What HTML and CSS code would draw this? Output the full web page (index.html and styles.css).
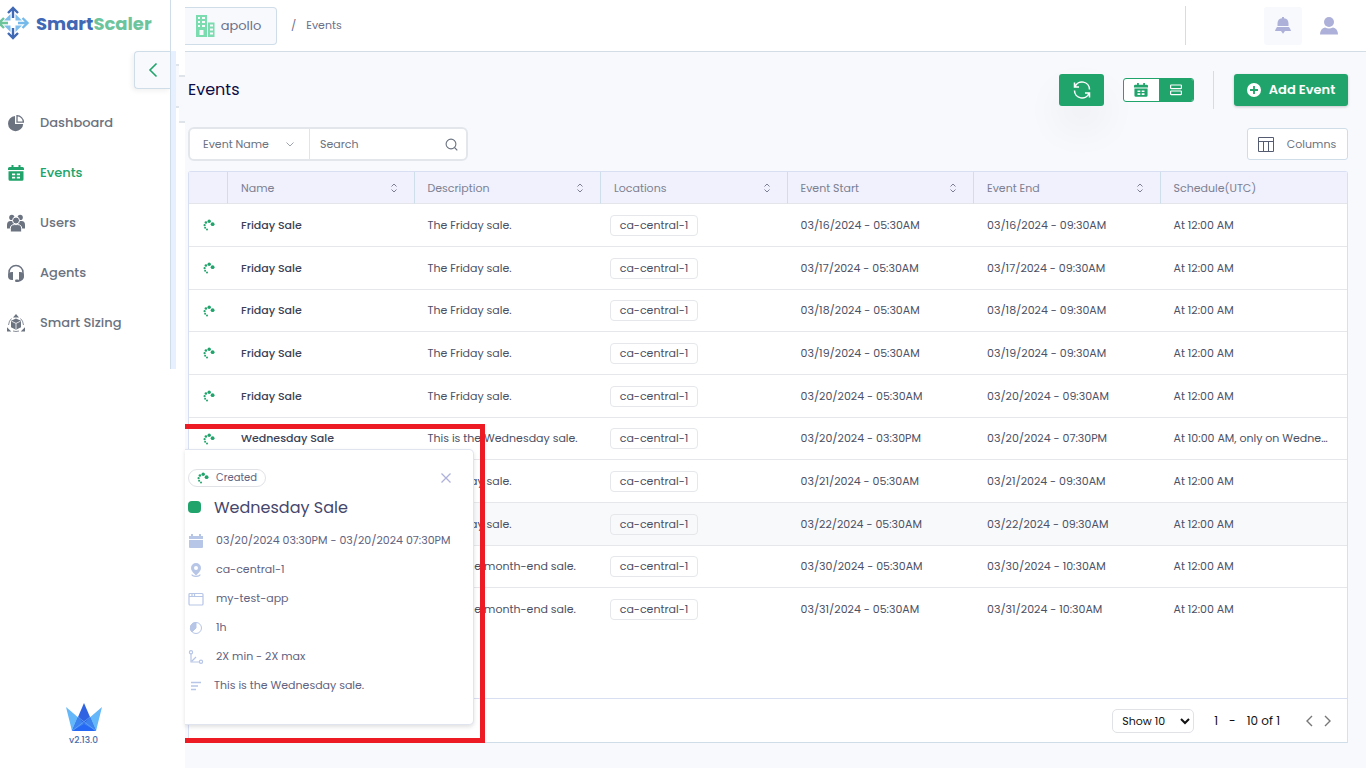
FILE: index.html
```html
<!DOCTYPE html>
<html lang="en">
<head>
    <meta charset="UTF-8">
    <meta name="viewport" content="width=device-width, initial-scale=1.0">
    <title>SmartScaler - Events</title>
    <link rel="stylesheet" href="styles.css">
</head>
<body>
    <!-- Shared icons -->
    <svg class="sprite" aria-hidden="true">
        <symbol id="spinner" viewBox="0 0 12 12">
            <circle cx="9.6" cy="5.2" r="1.9"/>
            <circle cx="6.200" cy="2.200" r="1.700"/>
            <circle cx="2.9" cy="3.5" r="1.300"/>
            <circle cx="1.6" cy="6.200" r="1.100"/>
            <circle cx="2.1" cy="8.800" r="1"/>
            <circle cx="4" cy="10.6" r="1"/>
        </symbol>
        <symbol id="sort" viewBox="0 0 8 12">
            <path d="M1.500 4.500 4 2l2.500 2.500M1.500 7.500 4 10l2.500-2.500" fill="none" stroke="currentColor"/>
        </symbol>
        <symbol id="calendar-grid" viewBox="0 0 16 16">
            <path d="M3.500 0h2v2h5V0h2v2h2q1.500 0 1.500 1.500V5H0V3.500Q0 2 1.500 2h2zM.5 6.200h15v8q0 1.500-1.500 1.500H2Q.5 15.700.5 14.200zM4 8.500v1.800h3.200V8.500zm4.800 0v1.800H12V8.500zM4 11.800v1.800h3.200v-1.800zm4.800 0v1.800H12v-1.800z" fill-rule="evenodd" fill="currentColor"/>
        </symbol>
    </svg>

    <div class="layout">
        <aside class="sidebar">
            <a class="logo" href="#">
                <svg width="30" height="34" viewBox="0 0 30 34" fill="none" stroke-width="2.400">
                    <path d="M13 12V2M8 7l5-5 5 5M13 22v10M8 27l5 5 5-5" stroke="#3f68b5"/>
                    <path d="M18 17h9M22.500 12l5 5-5 5" stroke="#74b9ea"/>
                    <path d="M8 17H-1M4 12l-5 5 5 5" stroke="#6cc49c"/>
                    <path d="M10.500 8v6.500H4zM15.500 8v6.500H22zM10.500 26v-6.500H4zM15.500 26v-6.500H22z" fill="#7fbdec"/>
                </svg>
                <span class="logo-smart">Smart</span><span class="logo-scaler">Scaler</span>
            </a>
            <button class="collapse-btn" aria-label="Collapse menu">
                <svg width="10" height="16" viewBox="0 0 10 16" fill="none" stroke="#20a46b" stroke-width="1.600"><path d="M8.500 1.500 2 8l6.500 6.500"/></svg>
            </button>
            <nav class="menu">
                <a href="#">
                    <svg width="18" height="18" viewBox="0 0 18 18" fill="currentColor"><path d="M8 2v8h8.200A7.600 7.600 0 1 1 8 2z"/><path d="M10 1.700a6.600 6.600 0 0 1 6.400 6.500H10z" fill="none" stroke="currentColor" stroke-width="1.300"/></svg>
                    Dashboard
                </a>
                <a class="active" href="#">
                    <svg width="18" height="18" viewBox="-1 -1 18 18"><use href="#calendar-grid" width="16" height="16"/></svg>
                    Events
                </a>
                <a href="#">
                    <svg width="18" height="18" viewBox="0 0 18 18" fill="currentColor"><circle cx="4.800" cy="3.400" r="2.600"/><circle cx="13.200" cy="3.400" r="2.600"/><path d="M0 14.500V11q0-4 3.500-4h11Q18 7 18 11v3.500z"/><g stroke="#fff" stroke-width="1"><circle cx="9" cy="6.500" r="3.500"/><path d="M3.300 18v-3.200q0-4.200 4-4.200h3.400q4 0 4 4.200V18z"/></g></svg>
                    Users
                </a>
                <a href="#">
                    <svg width="18" height="18" viewBox="0 0 18 18" fill="currentColor"><path d="M2 11V8.500a7 7 0 0 1 14 0V12q0 5-6 5" fill="none" stroke="currentColor" stroke-width="1.500"/><path d="M6 8v8Q1 16.500 1 12t5-4zM12 8v8q5 .5 5-4t-5-4z"/><rect x="8" y="15.500" width="4" height="2.500" rx="1.200"/></svg>
                    Agents
                </a>
                <a href="#">
                    <svg width="18" height="18" viewBox="0 0 18 18" fill="currentColor"><path d="M9 0l3 3.500H6zM0 17.500v-4.200l4.300 4.200zM18 17.500v-4.200l-4.300 4.200z"/><path d="M9 4.500l5 2.300v6.500L9 15.800l-5-2.500V6.800z"/><path d="M4.500 7.200 9 9.400l4.500-2.200M9 9.400v6" fill="none" stroke="#fff" stroke-width=".8"/><path d="M4.500 4.500Q2 6.500 1.500 11M13.500 4.500q2.500 2 3 6.500M6 17q3 1 6 0" fill="none" stroke="currentColor" stroke-width=".8"/></svg>
                    Smart Sizing
                </a>
            </nav>
            <div class="version">
                <svg width="36" height="28" viewBox="0 0 36 28">
                    <path d="M0 4l14 12-8 12zM36 4 22 16l8 12z" fill="#64b8fa"/>
                    <path d="M18 0l12 28H6z" fill="#2f63e2"/>
                    <path d="M6 28l12-8 12 8z" fill="#2468f5"/>
                    <path d="M6 28l6-14 6 7zM30 28l-6-14-6 7z" fill="#3d83ef"/>
                    <path d="M12 14l18 14M24 14 6 28" stroke="#69aaf8" stroke-width=".7"/>
                </svg>
                <span>v2.13.0</span>
            </div>
        </aside>
        <div class="rail"></div>
        <div class="seam seam-narrow"><i></i></div>
        <div class="seam seam-wide"><i></i></div>

        <main class="main">
            <header class="topbar">
                <button class="tenant">
                    <svg width="19" height="22" viewBox="0 0 19 22" fill="#7bdcb0"><path d="M0 0h11v22H0zM2 2v2h2V2zm4 0v2h3V2zM2 6v2h2V6zm4 0v2h3V6zm-4 4v2h2v-2zm4 0v2h3v-2zm-2.500 5v5h4v-5zM12 7.500h6.500V22H12zm2 2v2h3v-2zm0 4v2h3v-2zm0 4v2h3v-2z" fill-rule="evenodd"/></svg>
                    apollo
                </button>
                <div class="crumbs"><span>/</span><a href="#">Events</a></div>
                <div class="user-tools">
                    <button class="bell" aria-label="Notifications">
                        <svg width="16" height="17" viewBox="0 0 16 17" fill="#adb0d8"><path d="M2.500 9V6.500Q2.500 1.800 7 1.200V0h2v1.200q4.500.6 4.500 5.300V9zM2 10h12q1.500 2 2 4H0q.5-2 2-4zM6 14h4l-2 2.800z"/></svg>
                    </button>
                    <button class="profile" aria-label="Profile">
                        <svg width="18" height="18" viewBox="0 0 18 18" fill="#adb0d8"><circle cx="9" cy="5" r="5"/><path d="M0 17.500Q.5 11 5 10.500q4 2 8 0 4.500.5 5 7z"/></svg>
                    </button>
                </div>
            </header>

            <section class="content">
                <div class="title-row">
                    <h1>Events</h1>
                    <button class="refresh" aria-label="Refresh">
                        <svg width="18" height="18" viewBox="0 0 18 18" fill="none" stroke="#fff" stroke-width="1.500"><path d="M1.500 1.500V6H6M2 5.800A7.500 7.500 0 0 1 16.500 8.500M16.500 16.500V12H12M16 12.200A7.500 7.500 0 0 1 1.500 9.500"/></svg>
                    </button>
                    <div class="view-toggle">
                        <button aria-label="Calendar view"><svg width="14" height="14"><use href="#calendar-grid"/></svg></button>
                        <button class="selected" aria-label="List view">
                            <svg width="12" height="12" viewBox="0 0 12 12" fill="none" stroke="#fff" stroke-width="1.200"><rect x=".6" y="1" width="10.800" height="3.600" rx=".5"/><rect x=".6" y="7" width="10.800" height="3.600" rx=".5"/></svg>
                        </button>
                    </div>
                    <button class="add-event">
                        <svg width="14" height="14" viewBox="0 0 14 14"><circle cx="7" cy="7" r="7" fill="#fff"/><path d="M7 3v8M3 7h8" stroke="#20a46b" stroke-width="1.800"/></svg>
                        Add Event
                    </button>
                </div>

                <div class="filter-row">
                    <div class="search-group">
                        <label class="field">
                            <select aria-label="Search field"><option>Event Name</option></select>
                            <svg width="8" height="5" viewBox="0 0 8 5" fill="none" stroke="#9da3b0"><path d="M.5.5 4 4 7.500.5"/></svg>
                        </label>
                        <label class="search">
                            <input type="text" placeholder="Search" aria-label="Search">
                            <svg width="13" height="13" viewBox="0 0 13 13" fill="none" stroke="#6b7280" stroke-width="1.100"><circle cx="6" cy="6" r="4.900"/><path d="M9.500 9.500l2.800 2.800"/></svg>
                        </label>
                    </div>
                    <button class="columns">
                        <svg width="16" height="15" viewBox="0 0 16 15" fill="none" stroke="#555b70"><path d="M.5.5h15v14H.5zM.5 4.500h15M5.500 4.500v10M10.500 4.500v10"/></svg>
                        Columns
                    </button>
                </div>

                <div class="card">
                    <table class="events">
                        <thead>
                            <tr>
                                <th class="status"></th>
                                <th><div>Name <svg width="8" height="12"><use href="#sort"/></svg></div></th>
                                <th><div>Description <svg width="8" height="12"><use href="#sort"/></svg></div></th>
                                <th><div>Locations <svg width="8" height="12"><use href="#sort"/></svg></div></th>
                                <th><div>Event Start <svg width="8" height="12"><use href="#sort"/></svg></div></th>
                                <th><div>Event End <svg width="8" height="12"><use href="#sort"/></svg></div></th>
                                <th><div>Schedule(UTC)</div></th>
                            </tr>
                        </thead>
                        <tbody id="eventRows"></tbody>
                    </table>
                    <div class="pager">
                        <select aria-label="Rows per page"><option>Show 10</option></select>
                        <div class="range"><span>1</span><span>-</span><span>10 of 1</span></div>
                        <div class="pages">
                            <button aria-label="Previous page"><svg width="8" height="12" viewBox="0 0 8 12"><path d="M7 1 2 6l5 5"/></svg></button>
                            <button aria-label="Next page"><svg width="8" height="12" viewBox="0 0 8 12"><path d="M1 1l5 5-5 5"/></svg></button>
                        </div>
                    </div>
                </div>
            </section>

            <div class="highlight">
                <div class="popover">
                    <div class="popover-top">
                        <span class="badge"><svg width="12" height="12"><use href="#spinner"/></svg>Created</span>
                        <button aria-label="Close"><svg width="10" height="10" viewBox="0 0 10 10" stroke="#aeb1da" stroke-width="1.300"><path d="M.5.5l9 9M9.500.5l-9 9"/></svg></button>
                    </div>
                    <h2><i></i>Wednesday Sale</h2>
                    <ul>
                        <li><svg width="16" height="14" viewBox="0 0 16 14" fill="#b7c5e6"><path d="M3 0h2v2h6V0h2v2h2v3H1V2h2zM1 6h14v7q0 1-1 1H2q-1 0-1-1z"/></svg>03/20/2024 03:30PM - 03/20/2024 07:30PM</li>
                        <li><svg width="16" height="14" viewBox="0 0 16 14" fill="none" stroke="#b7c5e6"><circle cx="8" cy="5" r="3.500" stroke-width="3"/><path d="M5 8l3 3 3-3" stroke-width="2"/><path d="M4 11.500q0 1.800 4 1.800t4-1.800" stroke-width="1.300"/></svg>ca-central-1</li>
                        <li><svg width="16" height="14" viewBox="0 0 16 14" fill="none" stroke="#b7c5e6" stroke-width="1.200"><rect x="1" y="1.500" width="14" height="11.500" rx="1"/><path d="M1 4.500h14M4 1.500v3M6.500 1.500v3"/></svg>my-test-app</li>
                        <li><svg width="16" height="14" viewBox="0 0 16 14" fill="none" stroke="#b7c5e6"><circle cx="8" cy="7" r="5.500"/><path d="M8 1.500V7l-4 4A5.500 5.500 0 0 1 8 1.500z" fill="#b7c5e6"/></svg>1h</li>
                        <li><svg width="16" height="14" viewBox="0 0 16 14" fill="none" stroke="#b7c5e6" stroke-width="1.200"><circle cx="3" cy="2.200" r="1.600"/><circle cx="13" cy="11.800" r="1.600"/><path d="M3 4v8h8.400M4 11l4-4"/></svg>2X min - 2X max</li>
                        <li class="note"><svg width="16" height="14" viewBox="0 0 16 14" stroke="#b7c5e6" stroke-width="1.300"><path d="M3 3.500h10M3 7h7M3 10.500h5"/></svg>This is the Wednesday sale.</li>
                    </ul>
                </div>
            </div>
        </main>
    </div>

    <script>
        const friday = 'The Friday sale.';
        const monthEnd = 'This is the month-end sale.';
        const midnight = 'At 12:00 AM';
        const events = [
            ['Friday Sale', friday, '03/16/2024 - 05:30AM', '03/16/2024 - 09:30AM', midnight],
            ['Friday Sale', friday, '03/17/2024 - 05:30AM', '03/17/2024 - 09:30AM', midnight],
            ['Friday Sale', friday, '03/18/2024 - 05:30AM', '03/18/2024 - 09:30AM', midnight],
            ['Friday Sale', friday, '03/19/2024 - 05:30AM', '03/19/2024 - 09:30AM', midnight],
            ['Friday Sale', friday, '03/20/2024 - 05:30AM', '03/20/2024 - 09:30AM', midnight],
            ['Wednesday Sale', 'This is the Wednesday sale.', '03/20/2024 - 03:30PM', '03/20/2024 - 07:30PM', 'At 10:00 AM, only on Wednesday'],
            ['', friday, '03/21/2024 - 05:30AM', '03/21/2024 - 09:30AM', midnight],
            ['', friday, '03/22/2024 - 05:30AM', '03/22/2024 - 09:30AM', midnight],
            ['', monthEnd, '03/30/2024 - 05:30AM', '03/30/2024 - 10:30AM', midnight],
            ['', monthEnd, '03/31/2024 - 05:30AM', '03/31/2024 - 10:30AM', midnight]
        ];

        document.getElementById('eventRows').innerHTML = events.map(([name, description, start, end, schedule], i) => `
            <tr class="${i === 7 ? 'hovered' : ''}">
                <td class="status"><svg width="12" height="12"><use href="#spinner"/></svg></td>
                <td class="name">${name}</td>
                <td>${description}</td>
                <td class="location"><span>ca-central-1</span></td>
                <td>${start}</td>
                <td>${end}</td>
                <td>${schedule}</td>
            </tr>`).join('');
    </script>
</body>
</html>
```

FILE: styles.css
```css
* {
    box-sizing: border-box;
}

body {
    margin: 0;
    font-family: Poppins, Inter, sans-serif;
    font-size: 11px;
    color: #4b5064;
    background-color: #fff;
}

button, input, select {
    font: inherit;
    color: inherit;
}

button {
    display: flex;
    align-items: center;
    justify-content: center;
    padding: 0;
    border: none;
    background: none;
    cursor: pointer;
}

a {
    color: inherit;
    text-decoration: none;
}

svg {
    flex-shrink: 0;
}

.sprite {
    position: absolute;
    width: 0;
    height: 0;
}

.layout {
    display: flex;
    min-height: 100vh;
}

/* Sidebar */
.sidebar {
    display: flex;
    flex-direction: column;
    width: 171px;
    flex-shrink: 0;
}

.logo {
    display: flex;
    align-items: center;
    height: 51px;
    padding-bottom: 5px;
    font-size: 18px;
    font-weight: 700;
}

.logo-smart {
    margin-left: 6px;
    color: #3f68b5;
}

.logo-scaler {
    color: #6cc49c;
}

.collapse-btn {
    align-self: flex-end;
    width: 37px;
    height: 38px;
    border: 1px solid #cfdde8;
    border-right: none;
    border-radius: 4px 0 0 4px;
    background-color: #f8f9fd;
    box-shadow: -2px 2px 5px rgba(0, 0, 0, 0.06);
}

.menu {
    display: flex;
    flex-direction: column;
    margin-top: 9px;
}

.menu a {
    display: flex;
    align-items: center;
    gap: 15px;
    height: 50px;
    padding-left: 7px;
    font-size: 13px;
    font-weight: 500;
    color: #6b7280;
}

.menu .active {
    color: #20a46b;
}

.version {
    display: flex;
    flex-direction: column;
    align-items: center;
    gap: 3px;
    margin-top: auto;
    padding: 0 4px 22px 0;
    font-size: 9px;
    font-weight: 500;
    line-height: 12px;
    color: #4a6dab;
}

.rail {
    width: 6px;
    height: 369px;
    margin-left: -1px;
    flex-shrink: 0;
    border-left: 1px solid #cfdde8;
    background: linear-gradient(#fff 51px, #e6f0fe 51px);
}

.seam {
    flex-shrink: 0;
}

.seam i {
    display: block;
    border: solid #dfe4ea;
    border-width: 2px 0;
    background-color: #f8f9fd;
}

.seam-narrow {
    width: 3px;
    padding-top: 64px;
}

.seam-narrow i {
    height: 44px;
}

.seam-wide {
    width: 6px;
    padding-top: 75px;
}

.seam-wide i {
    height: 48px;
}

/* Main area */
.main {
    position: relative;
    display: flex;
    flex-direction: column;
    flex: 1;
    min-width: 0;
    background-color: #f8f9fd;
}

.topbar {
    display: flex;
    align-items: center;
    height: 52px;
    border-bottom: 1px solid #d3dde5;
    background-color: #fff;
}

.tenant {
    gap: 6px;
    width: 92px;
    height: 38px;
    padding-right: 4px;
    border: 1px solid #cfdde8;
    border-left: none;
    border-radius: 0 4px 4px 0;
    background-color: #f8f9fd;
    font-size: 13px;
    color: #6b7089;
}

.crumbs {
    display: flex;
    gap: 10px;
    margin-left: 14px;
    font-size: 11px;
    color: #6b7089;
}

.user-tools {
    display: flex;
    align-items: center;
    justify-content: flex-end;
    gap: 18px;
    width: 181px;
    height: 39px;
    margin-left: auto;
    padding-right: 28px;
    border-left: 1px solid #d3dde5;
}

.bell {
    width: 38px;
    height: 38px;
    border-radius: 3px;
    background-color: #f8f9fd;
}

.content {
    display: flex;
    flex-direction: column;
    flex: 1;
    padding: 18px 18px 25px 3px;
}

.title-row {
    display: flex;
    align-items: center;
    height: 40px;
}

h1 {
    margin: 0;
    font-size: 16px;
    font-weight: 400;
    line-height: 22px;
    color: #0c0c46;
}

.refresh {
    width: 45px;
    height: 32px;
    margin-left: auto;
    border-radius: 3px;
    background-color: #20a46b;
    box-shadow: 0 20px 40px rgba(0, 0, 0, 0.06);
}

.view-toggle {
    display: flex;
    width: 71px;
    height: 24px;
    margin-left: 19px;
    border: 1px solid #20a46b;
    border-radius: 3px;
    background-color: #fff;
    overflow: hidden;
}

.view-toggle button {
    flex: 1;
    color: #20a46b;
}

.view-toggle .selected {
    background-color: #20a46b;
}

.add-event {
    position: relative;
    gap: 8px;
    width: 114px;
    height: 32px;
    margin-left: 40px;
    border-radius: 3px;
    background-color: #20a46b;
    box-shadow: 0 1px 3px rgba(0, 0, 0, 0.2);
    font-size: 13px;
    font-weight: 600;
    color: #fff;
}

.add-event::before {
    content: "";
    position: absolute;
    top: -3px;
    left: -21px;
    height: 38px;
    border-left: 1px solid #d3dde5;
}

.filter-row {
    display: flex;
    align-items: center;
    justify-content: space-between;
    height: 34px;
    margin: 17px 0 10px;
}

.search-group {
    display: flex;
    width: 280px;
    height: 34px;
    border: 2px solid #e3e7eb;
    border-radius: 6px;
    background-color: #fff;
}

.field, .search {
    display: flex;
    align-items: center;
}

.field {
    width: 120px;
    flex-shrink: 0;
    padding: 0 15px 0 13px;
    border-right: 1px solid #dfe5ea;
}

.field select {
    flex: 1;
    min-width: 0;
    padding: 0;
    border: none;
    background: none;
    appearance: none;
    color: #6b7280;
}

.search {
    flex: 1;
    min-width: 0;
    padding: 0 8px 0 10px;
}

.search input {
    flex: 1;
    min-width: 0;
    padding: 0;
    border: none;
    background: none;
}

.search input::placeholder {
    color: #6b7280;
}

.columns {
    gap: 13px;
    width: 101px;
    height: 32px;
    padding-right: 1px;
    border: 1px solid #cfdde8;
    border-radius: 3px;
    background-color: #fff;
    color: #6b7280;
}

/* Events table */
.card {
    display: flex;
    flex-direction: column;
    flex: 1;
    border: 1px solid #d9dff3;
    border-bottom-color: #cfdde8;
    border-radius: 3px 3px 0 0;
    background-color: #fff;
}

.events {
    width: 100%;
    border-collapse: separate;
    border-spacing: 0;
    table-layout: fixed;
}

.events th {
    height: 32px;
    padding: 1px 16px 0 13px;
    border-right: 1px solid #cfdfe9;
    border-bottom: 1px solid #e3e5ea;
    background-color: #f0f1fc;
    font-weight: 400;
    text-align: left;
    color: #7c8092;
}

.events th:last-child {
    border-right: none;
}

.events th div {
    display: flex;
    align-items: center;
    justify-content: space-between;
}

.events td {
    height: 43px;
    padding: 0 16px 0 13px;
    border-bottom: 1px solid #e5e7eb;
    overflow: hidden;
    text-overflow: ellipsis;
    white-space: nowrap;
}

.events tr:nth-child(3n) td {
    height: 42px;
}

.events tr:last-child td {
    border-bottom: none;
}

.events .hovered td {
    background-color: #f8f9fb;
}

.events .status {
    width: 39px;
    padding: 0;
    text-align: center;
    fill: #20a46b;
}

.status svg {
    vertical-align: middle;
}

.events .name {
    font-weight: 500;
    color: #3c4155;
}

.events .location {
    padding-left: 9px;
}

.location span {
    display: inline-block;
    width: 88px;
    border: 1px solid #e5e7eb;
    border-radius: 4px;
    line-height: 19px;
    text-align: center;
}

.pager {
    display: flex;
    align-items: center;
    justify-content: flex-end;
    height: 44px;
    margin-top: auto;
    padding-right: 15px;
    border-top: 1px solid #d9dff3;
    font-size: 12px;
    color: #111;
}

.pager select {
    width: 82px;
    height: 24px;
    padding-left: 5px;
    border: 1px solid #e0e2e6;
    border-radius: 5px;
    background-color: #fff;
    font-size: 11px;
}

.range {
    display: flex;
    gap: 11px;
    margin: 0 25px 0 20px;
}

.pages {
    display: flex;
    gap: 11px;
}

.pages svg {
    fill: none;
    stroke: #777;
    stroke-width: 1.4;
}

/* Event details over the table */
.highlight {
    position: absolute;
    top: 424px;
    left: 0;
    width: 300px;
    height: 319px;
    border: 5px solid #ed1c24;
    border-left: none;
}

.popover {
    width: 289px;
    height: 276px;
    margin-top: 20px;
    padding: 18px 18px 0 3px;
    border: 1px solid #dfe4ee;
    border-left: none;
    border-radius: 0 5px 5px 0;
    background-color: #fff;
    box-shadow: 0 2px 4px rgba(0, 0, 0, 0.12);
    color: #5f6280;
}

.popover-top {
    display: flex;
    align-items: center;
    justify-content: space-between;
    height: 20px;
    padding-right: 4px;
}

.badge {
    display: flex;
    align-items: center;
    gap: 7px;
    height: 18px;
    padding: 0 8px;
    border: 1px solid #e0e2e6;
    border-radius: 9px;
    font-size: 10px;
}

.badge svg {
    fill: #20a46b;
}

.popover h2 {
    display: flex;
    align-items: center;
    gap: 13px;
    height: 24px;
    margin: 7px 0;
    font-size: 16px;
    font-weight: 400;
    color: #45466b;
}

.popover h2 i {
    width: 13px;
    height: 12px;
    border-radius: 4px;
    background-color: #20a46b;
}

.popover ul {
    margin: 0;
    padding: 0;
    list-style: none;
}

.popover li {
    display: flex;
    align-items: center;
    gap: 12px;
    height: 29px;
    white-space: nowrap;
}

.popover .note {
    gap: 10px;
}
```
